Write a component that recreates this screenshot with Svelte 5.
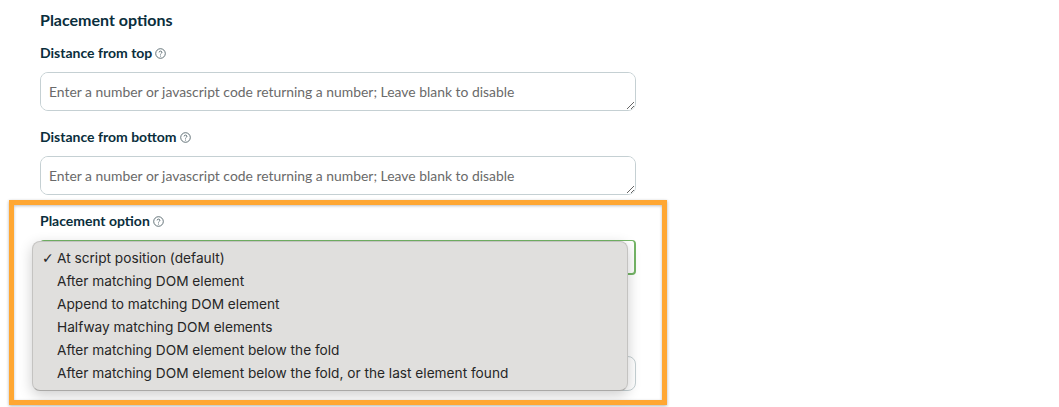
<script>
  const placeholder = 'Enter a number or javascript code returning a number; Leave blank to disable';
  const options = [
    'At script position (default)',
    'After matching DOM element',
    'Append to matching DOM element',
    'Halfway matching DOM elements',
    'After matching DOM element below the fold',
    'After matching DOM element below the fold, or the last element found'
  ];
</script>

{#snippet help()}
  <svg class="help" width="11" height="11" viewBox="0 0 11 11" aria-hidden="true">
    <circle cx="5.5" cy="5.5" r="4.8" fill="none" stroke="#3f5259" stroke-width="0.8" />
    <path d="M4.1 4.4c0-.8.6-1.3 1.4-1.3s1.4.5 1.4 1.2c0 .6-.4.9-.8 1.2-.4.3-.6.5-.6 1" fill="none" stroke="#3f5259" stroke-width="0.8" />
    <circle cx="5.5" cy="7.9" r="0.5" fill="#3f5259" />
  </svg>
{/snippet}

<div class="page">
  <h2>Placement options</h2>

  <div class="field">
    <label for="top">Distance from top<span class="gap"></span>{@render help()}</label>
    <textarea id="top" {placeholder}></textarea>
  </div>

  <div class="field">
    <label for="bottom">Distance from bottom<span class="gap"></span>{@render help()}</label>
    <textarea id="bottom" {placeholder}></textarea>
  </div>

  <div class="field select-field">
    <label for="placement">Placement option<span class="gap"></span>{@render help()}</label>
    <div id="placement" class="select"></div>

    <ul class="menu">
      {#each options as option, i}
        <li>
          <span class="check">{i === 0 ? '✓' : ''}</span>{option}
        </li>
      {/each}
    </ul>
  </div>

  <div class="next-input"></div>

  <div class="highlight"></div>
</div>

<style>
  :global(body) {
    background: #fff;
  }
  .page {
    position: relative;
    box-sizing: border-box;
    width: 1059px;
    height: 407px;
    padding: 10px 0 0 40px;
    overflow: hidden;
    font-family: Lato, sans-serif;
    color: #0a2e3c;
  }
  h2 {
    margin: 0 0 15px;
    font-size: 16px;
    line-height: 19px;
    font-weight: 700;
  }
  .field {
    width: 596px;
    margin-bottom: 17px;
  }
  label {
    display: block;
    margin-bottom: 10px;
    font-size: 14px;
    line-height: 18px;
    font-weight: 700;
  }
  .gap {
    display: inline-block;
    width: 3px;
  }
  .help {
    vertical-align: -1px;
  }
  textarea {
    display: block;
    box-sizing: border-box;
    width: 596px;
    height: 39px;
    margin: 0;
    padding: 10px 8px;
    border: 1px solid #c5d0d3;
    border-radius: 8px;
    background: #fff;
    font-family: Lato, sans-serif;
    font-size: 13.9px;
    line-height: 18px;
    outline: none;
  }
  textarea::placeholder {
    color: #6a6a6a;
    opacity: 1;
  }
  .select-field {
    position: relative;
    margin-top: 17px;
  }
  .select {
    box-sizing: border-box;
    width: 596px;
    height: 35px;
    margin-top: 10px;
    border: 2px solid #74b566;
    border-top-width: 1px;
    border-radius: 4px;
    background: #fff;
  }
  .menu {
    position: absolute;
    left: -8px;
    top: 29px;
    box-sizing: border-box;
    width: 596px;
    height: 150px;
    margin: 0;
    padding: 4px 0 0;
    list-style: none;
    border: 1px solid #c4c3c1;
    border-bottom-color: #aaa9a7;
    border-radius: 8px;
    background: #e0dfdd;
    box-shadow: 0 4px 14px rgba(0, 0, 0, 0.2);
    font-family: Inter, sans-serif;
    font-size: 13.68px;
    color: #262626;
  }
  .menu li {
    display: flex;
    align-items: center;
    height: 23px;
    white-space: pre;
  }
  .check {
    width: 24px;
    padding-left: 9px;
    box-sizing: border-box;
    font-family: "DejaVu Sans", sans-serif;
    font-size: 14px;
    font-weight: 700;
  }
  .next-input {
    position: absolute;
    left: 40px;
    top: 356px;
    box-sizing: border-box;
    width: 596px;
    height: 35px;
    border: 1px solid #c5d0d3;
    border-radius: 8px;
    z-index: -1;
  }
  .highlight {
    position: absolute;
    left: 9px;
    top: 200px;
    box-sizing: border-box;
    width: 658px;
    height: 205px;
    border: 5px solid #ffa733;
    box-shadow: 0 1px 3px rgba(0, 0, 0, 0.3), inset 0 1px 3px rgba(0, 0, 0, 0.25);
    pointer-events: none;
  }
</style>
